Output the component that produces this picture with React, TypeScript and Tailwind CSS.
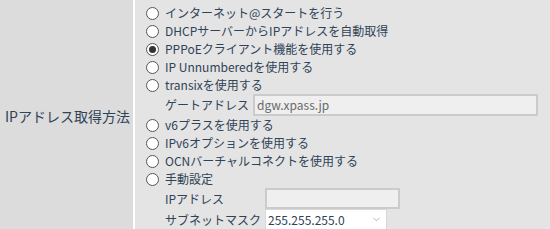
import { ChevronDown } from "lucide-react";

const FONT = "font-['Noto_Sans_CJK_JP',sans-serif]";

function Radio({ checked, label }: { checked?: boolean; label: string }) {
    return (
        <label className="flex items-center h-[18px] whitespace-nowrap">
            <span className="shrink-0 w-[13px] h-[13px] rounded-full border border-[#555] bg-white flex items-center justify-center">
                {checked && <span className="w-[7px] h-[7px] rounded-full bg-[#333]" />}
            </span>
            <span className="ml-[6px]">{label}</span>
        </label>
    );
}

export default function App() {
    return (
        <div className={`w-[550px] h-[229px] flex text-[12px] leading-none text-[#2f4357] whitespace-nowrap ${FONT}`}>
            <div className="w-[133px] shrink-0 bg-[#dcdcdc] flex items-center pl-[5px] pt-[2px] text-[14px]">
                IPアドレス取得方法
            </div>
            <div className="w-[2px] shrink-0 bg-white" />
            <div className="flex-1 bg-[#e4e4e4] pl-[11px] pt-[4px]">
                <Radio label="インターネット@スタートを行う" />
                <Radio label="DHCPサーバーからIPアドレスを自動取得" />
                <Radio checked label="PPPoEクライアント機能を使用する" />
                <Radio label="IP Unnumberedを使用する" />
                <Radio label="transixを使用する" />
                <div className="flex items-center h-[22px] pl-[19px]">
                    <span className="w-[88px] shrink-0">ゲートアドレス</span>
                    <div className="w-[285px] h-[22px] border-2 border-[#cbcbcb] bg-[#efefef] flex items-center pl-[2px] text-[#6a6a6a]">
                        dgw.xpass.jp
                    </div>
                </div>
                <Radio label="v6プラスを使用する" />
                <Radio label="IPv6オプションを使用する" />
                <Radio label="OCNバーチャルコネクトを使用する" />
                <Radio label="手動設定" />
                <div className="pl-[19px]">
                    <div className="flex items-center h-[21px]">
                        <span className="w-[100px] shrink-0">IPアドレス</span>
                        <div className="w-[135px] h-[21px] border-2 border-[#cbcbcb] bg-[#efefef]" />
                    </div>
                    <div className="flex items-center h-[21px]">
                        <span className="w-[100px] shrink-0">サブネットマスク</span>
                        <div className="w-[122px] h-[21px] border border-[#d8d8d8] bg-white flex items-center justify-between pl-[2px] pr-[4px]">
                            <span>255.255.255.0</span>
                            <ChevronDown className="w-[11px] h-[11px] text-[#999]" strokeWidth={1.5} />
                        </div>
                    </div>
                </div>
            </div>
        </div>
    );
}
